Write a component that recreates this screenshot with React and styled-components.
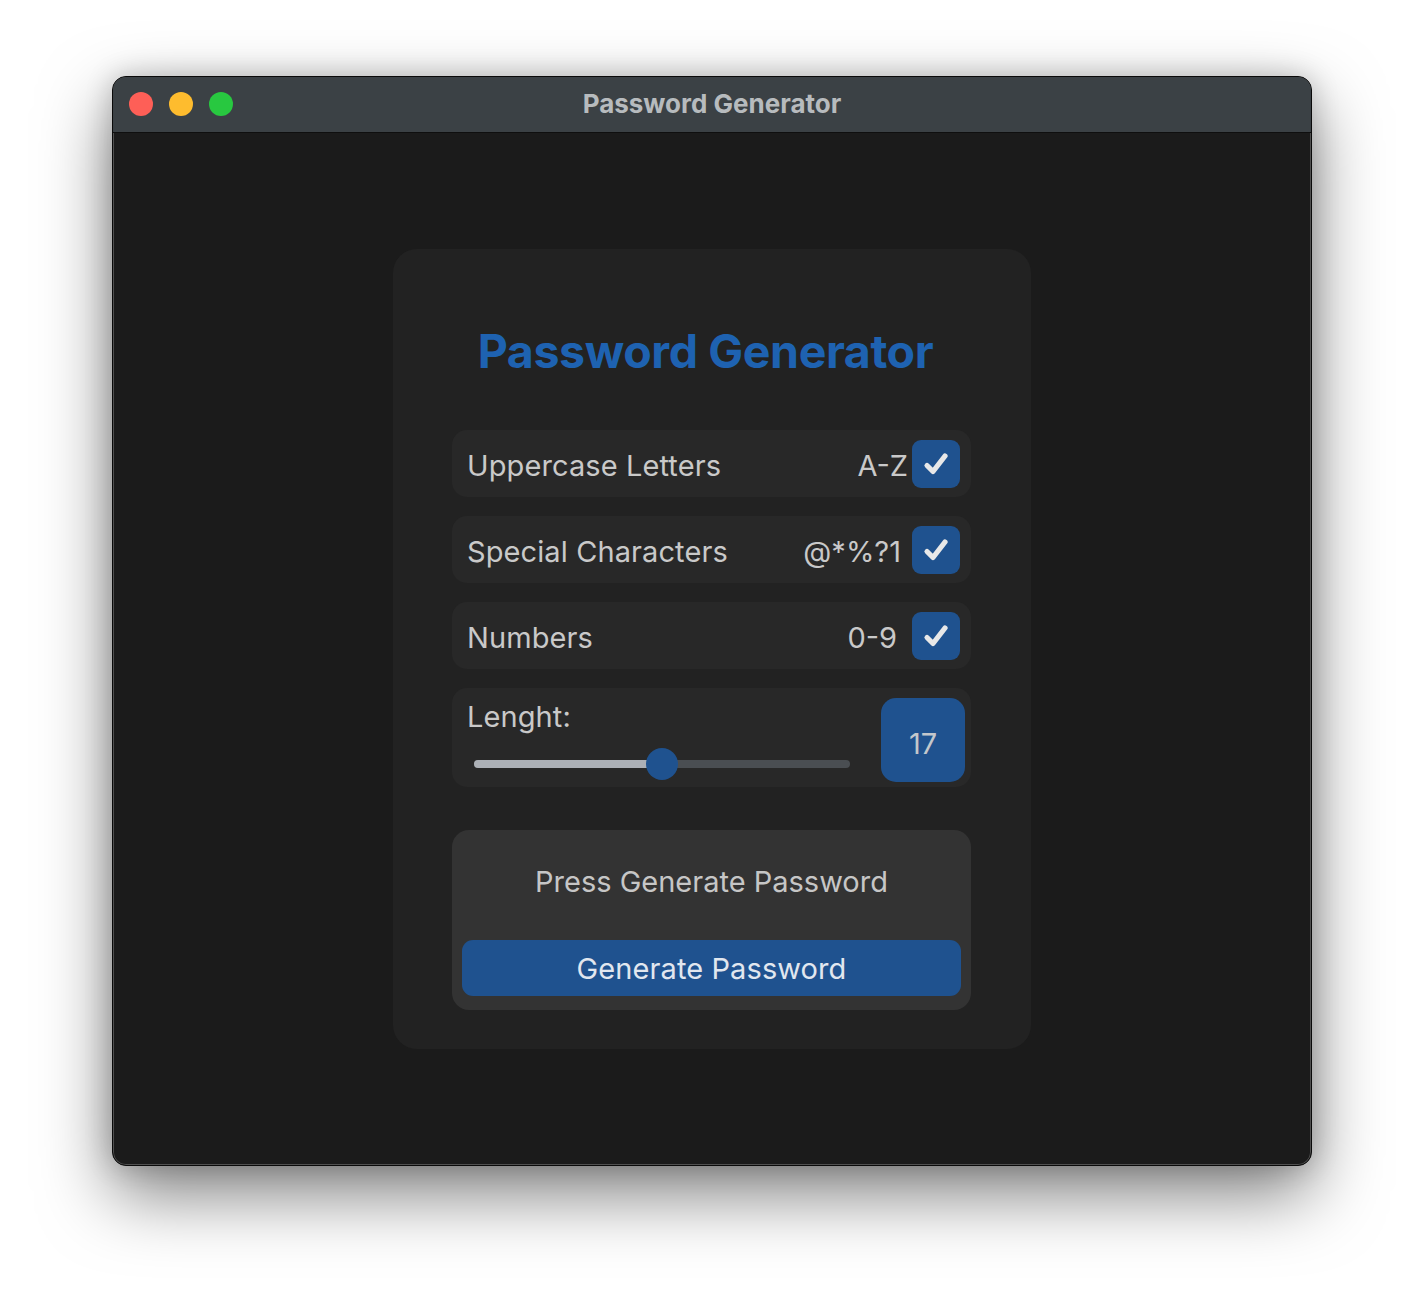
import React from "react";
import styled, { createGlobalStyle } from "styled-components";

const Global = createGlobalStyle`
  html, body { margin: 0; padding: 0; background: #ffffff; }
  body { font-family: Inter, "Noto Sans", "Liberation Sans", sans-serif; }
  * { box-sizing: border-box; }
`;

const Page = styled.div`
  width: 1424px;
  height: 1314px;
  padding: 76px 112px 0 112px;
  background: #ffffff;
`;

const Window = styled.div`
  width: 1200px;
  height: 1090px;
  border-radius: 14px;
  background: #1b1b1b;
  border: 1px solid #0a0a0a;
  box-shadow: inset 0 0 0 1px #505050, 0 28px 70px rgba(0, 0, 0, 0.5),
    0 0 28px rgba(0, 0, 0, 0.2);
  overflow: hidden;
  display: flex;
  flex-direction: column;
`;

const TitleBar = styled.div`
  position: relative;
  height: 56px;
  flex: none;
  background: #3b4145;
  border-bottom: 1px solid #0f0f0f;
  display: flex;
  align-items: center;
  justify-content: center;
`;

const Lights = styled.div`
  position: absolute;
  left: 16px;
  top: 15px;
  display: flex;
  gap: 16px;
`;

const Light = styled.span`
  width: 24px;
  height: 24px;
  border-radius: 50%;
  background: ${(p) => p.$c};
`;

const WindowTitle = styled.div`
  font-size: 26px;
  font-weight: 700;
  color: #b7bbbe;
  margin-top: -2px;
`;

const Content = styled.div`
  flex: 1;
  display: flex;
  align-items: center;
  justify-content: center;
`;

const Card = styled.div`
  width: 638px;
  height: 800px;
  background: #222222;
  border-radius: 24px;
  padding: 0 60px 0 59px;
  display: flex;
  flex-direction: column;
`;

const Heading = styled.h1`
  margin: 70px 0 0 0;
  padding-right: 12px;
  height: 65px;
  line-height: 65px;
  text-align: center;
  font-size: 46.5px;
  font-weight: 700;
  color: #1e62b1;
  letter-spacing: -0.4px;
`;

const Options = styled.div`
  margin-top: 46px;
  display: flex;
  flex-direction: column;
  gap: 19px;
`;

const Row = styled.div`
  height: 67px;
  flex: none;
  background: #282828;
  border-radius: 15px;
  display: flex;
  align-items: center;
  padding: 0 11px 0 15px;
`;

const Label = styled.span`
  flex: 1;
  font-size: 29px;
  color: #c9c9c9;
  letter-spacing: 0.1px;
  padding-top: 4px;
`;

const LengthLabel = styled(Label)`
  flex: none;
  padding-top: 0;
`;

const Hint = styled.span`
  font-size: 29px;
  color: #c9c9c9;
  padding-top: 4px;
  margin-right: ${(p) => p.$mr || 5}px;
`;

const Check = styled.div`
  width: 48px;
  height: 48px;
  border-radius: 9px;
  background: #1f528f;
  display: flex;
  align-items: center;
  justify-content: center;
`;

const LengthRow = styled(Row)`
  height: 99px;
  padding: 0 6px 0 15px;
  align-items: stretch;
`;

const LengthLeft = styled.div`
  flex: 1;
  display: flex;
  flex-direction: column;
  padding-top: 11px;
`;

const SliderWrap = styled.div`
  position: relative;
  margin: 14px 0 0 7px;
  width: 376px;
  height: 32px;
  display: flex;
  align-items: center;
`;

const Track = styled.div`
  width: 100%;
  height: 8px;
  border-radius: 4px;
  background: #4a4e52;
  overflow: hidden;
`;

const Fill = styled.div`
  height: 100%;
  background: #acb0b6;
`;

const Thumb = styled.div`
  position: absolute;
  top: 0;
  width: 32px;
  height: 32px;
  margin-left: -16px;
  border-radius: 50%;
  background: #1f528f;
`;

const NumBox = styled.div`
  align-self: center;
  margin-top: 5px;
  width: 84px;
  height: 84px;
  border-radius: 15px;
  background: #1f528f;
  display: flex;
  align-items: center;
  justify-content: center;
  padding-top: 6px;
  font-size: 29px;
  color: #c3c7cc;
`;

const Output = styled.div`
  margin-top: 43px;
  height: 180px;
  background: #333333;
  border-radius: 17px;
  padding: 0 10px 14px 10px;
  display: flex;
  flex-direction: column;
`;

const OutText = styled.div`
  flex: 1;
  display: flex;
  align-items: center;
  justify-content: center;
  padding-bottom: 8px;
  font-size: 29px;
  color: #c6c6c6;
`;

const GenButton = styled.button`
  height: 56px;
  border: none;
  border-radius: 11px;
  background: #1f528f;
  color: #e1e7ef;
  font-family: inherit;
  font-size: 29px;
  padding-top: 2px;
  letter-spacing: 0.1px;
  cursor: pointer;
`;

const CheckIcon = () => (
  <svg width="30" height="30" viewBox="0 0 30 30">
    <path
      d="M6 16.5 L12 22.5 L24 7"
      fill="none"
      stroke="#e8e8e8"
      strokeWidth="5.2"
      strokeLinecap="round"
      strokeLinejoin="round"
    />
  </svg>
);

const options = [
  { label: "Uppercase Letters", hint: "A-Z", mr: 4 },
  { label: "Special Characters", hint: "@*%?1", mr: 11 },
  { label: "Numbers", hint: "0-9", mr: 15 },
];

export default function App() {
  const value = 17;
  const pct = 50;
  return (
    <Page>
      <Global />
      <Window>
        <TitleBar>
          <Lights>
            <Light $c="#fe5f57" />
            <Light $c="#febc2e" />
            <Light $c="#28c840" />
          </Lights>
          <WindowTitle>Password Generator</WindowTitle>
        </TitleBar>
        <Content>
          <Card>
            <Heading>Password Generator</Heading>
            <Options>
              {options.map((o) => (
                <Row key={o.label}>
                  <Label>{o.label}</Label>
                  <Hint $mr={o.mr}>{o.hint}</Hint>
                  <Check>
                    <CheckIcon />
                  </Check>
                </Row>
              ))}
              <LengthRow>
                <LengthLeft>
                  <LengthLabel>Lenght:</LengthLabel>
                  <SliderWrap>
                    <Track>
                      <Fill style={{ width: `${pct}%` }} />
                    </Track>
                    <Thumb style={{ left: `${pct}%` }} />
                  </SliderWrap>
                </LengthLeft>
                <NumBox>{value}</NumBox>
              </LengthRow>
            </Options>
            <Output>
              <OutText>Press Generate Password</OutText>
              <GenButton>Generate Password</GenButton>
            </Output>
          </Card>
        </Content>
      </Window>
    </Page>
  );
}
